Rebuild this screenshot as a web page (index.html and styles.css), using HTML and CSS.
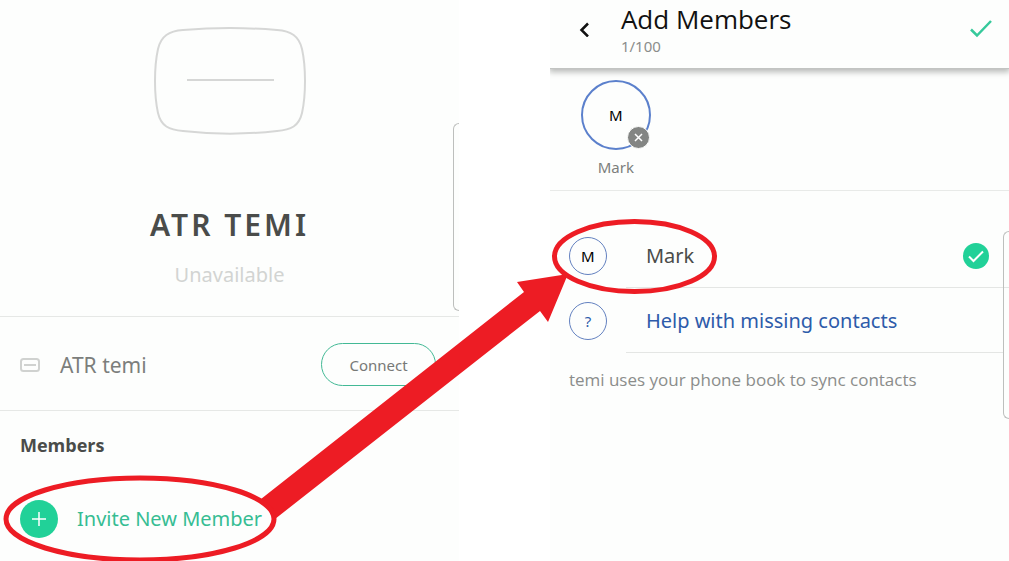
FILE: index.html
```html
<!DOCTYPE html>
<html lang="en">
<head>
<meta charset="utf-8">
<meta name="viewport" content="width=device-width, initial-scale=1">
<title>Add Members</title>
<link rel="stylesheet" href="styles.css">
</head>
<body>
<main class="guide">
  <section class="screen robot">
    <div class="hero">
      <svg class="hero-icon" viewBox="0 0 152 108" aria-hidden="true">
        <path d="M1 54C1 40 2 31 4 22C7 9 15 4 29 3C60 .5 92 .5 123 3C137 4 145 9 148 22C150 31 151 40 151 54C151 68 150 77 148 86C145 99 137 103 123 104C92 107.500 60 107.500 29 104C15 103 7 99 4 86C2 77 1 68 1 54Z"/>
        <path d="M33 53H120"/>
      </svg>
      <h1 class="robot-name">ATR TEMI</h1>
      <p class="status">Unavailable</p>
      <div class="edge-handle"></div>
    </div>
    <div class="device">
      <svg class="device-icon" viewBox="0 0 20 14" aria-hidden="true"><rect x="1" y="1" width="18" height="12" rx="2.500"/><path d="M4 7H16"/></svg>
      <span class="device-name">ATR temi</span>
      <button class="connect" type="button">Connect</button>
    </div>
    <h2 class="section-title">Members</h2>
    <button class="invite" type="button">
      <svg class="plus" viewBox="0 0 38 38" aria-hidden="true"><circle cx="19" cy="19" r="19"/><path d="M12 19H26M19 12V26"/></svg>
      <span>Invite New Member</span>
    </button>
  </section>

  <section class="screen picker">
    <header class="bar">
      <button class="icon-button" type="button" aria-label="Back">
        <svg class="back" viewBox="0 0 12 16" aria-hidden="true"><path d="M9 2.500L2.500 9L9 15.500"/></svg>
      </button>
      <div class="bar-text">
        <h2 class="bar-title">Add Members</h2>
        <p class="count">1/100</p>
      </div>
      <button class="icon-button" type="button" aria-label="Done">
        <svg class="done" viewBox="0 0 22 18" aria-hidden="true"><path d="M1 9.500L7 15.500L21 1"/></svg>
      </button>
    </header>
    <div class="chosen">
      <div class="person">
        <div class="avatar large">M
          <button class="remove" type="button" aria-label="Remove Mark">
            <svg viewBox="0 0 21 21" aria-hidden="true"><path d="M7 7L14 14M14 7L7 14"/></svg>
          </button>
        </div>
        <span class="person-name">Mark</span>
      </div>
    </div>
    <div class="contacts">
      <div class="contact">
        <span class="avatar">M</span>
        <div class="contact-body">
          <span>Mark</span>
          <svg class="selected" viewBox="0 0 26 26" role="img" aria-label="Selected"><circle cx="13" cy="13" r="13"/><path d="M6 13.500L10.500 18L20 8.500"/></svg>
        </div>
      </div>
      <div class="contact">
        <span class="avatar help-mark">?</span>
        <div class="contact-body"><a class="help" href="#help">Help with missing contacts</a></div>
      </div>
      <p class="note">temi uses your phone book to sync contacts</p>
      <div class="edge-handle"></div>
    </div>
  </section>

  <svg class="markup" viewBox="0 0 1009 561" aria-hidden="true">
    <path class="arrow" d="M261 499L524 292L517 282L568 274L548 322L540 311L275 519Z"/>
    <ellipse class="ring" cx="140" cy="519" rx="134" ry="41"/>
    <ellipse class="ring" cx="634.500" cy="256.500" rx="80" ry="35"/>
  </svg>
</main>
</body>
</html>
```
FILE: styles.css
```css
* { box-sizing: border-box; }
body { margin: 0; background: #fff; color: #4a4c4a; font-family: "Noto Sans", "Open Sans", sans-serif; overflow: hidden; }
h1, h2, p { margin: 0; }
button { padding: 0; border: 0; background: none; font: inherit; color: inherit; cursor: pointer; }
svg { display: block; fill: none; flex: none; }

.guide { position: relative; display: grid; grid-template-columns: 459fr 459fr; column-gap: 9%; min-height: 100vh; }
.screen { background: #fdfefd; min-width: 0; overflow: hidden; }

.hero { position: relative; display: flex; flex-direction: column; align-items: center; padding: 27px 0 27px; border-bottom: 1px solid #e6e8e6; }
.hero-icon { width: 152px; height: 108px; stroke: #d6d7d6; stroke-width: 2; }
.robot-name { margin-top: 69px; font-size: 30px; line-height: 42px; font-weight: 600; letter-spacing: 3px; }
.status { margin-top: 15px; font-size: 20px; line-height: 28px; color: #d2d4d2; }
.edge-handle { position: absolute; right: 0; top: 123px; width: 6px; height: 188px; border: 1px solid #bdbfbd; border-right: 0; border-radius: 6px 0 0 6px; }

.device { display: flex; align-items: center; padding: 26px 23px 24px 20px; border-bottom: 1px solid #e6e8e6; }
.device-icon { width: 20px; height: 14px; stroke: #d0d2d0; stroke-width: 2; }
.device-name { flex: 1; margin-left: 20px; font-size: 21px; line-height: 28px; color: #7c7e7c; }
.connect { width: 115px; height: 43px; border: 1px solid #42b995; border-radius: 22px; font-size: 15px; color: #777977; }

.section-title { margin: 20px 20px 0; font-family: "Open Sans", "Noto Sans", sans-serif; font-size: 18px; line-height: 28px; font-weight: 700; }
.invite { display: flex; align-items: center; gap: 19px; margin: 41px 20px 0; font-size: 20px; line-height: 28px; color: #36bd93; }
.plus { width: 38px; height: 38px; stroke: #fff; stroke-width: 1.500; }
.plus circle { fill: #21d198; stroke: none; }

.bar { position: relative; display: flex; align-items: flex-start; height: 69px; padding: 2px 17px 0 29px; border-bottom: 1px solid #c2c4c2; box-shadow: 0 2px 6px 1px #b6b8b6; }
.icon-button { height: 54px; display: flex; align-items: center; }
.back { width: 12px; height: 16px; stroke: #111; stroke-width: 2.500; }
.bar-text { flex: 1; margin-left: 30px; }
.bar-title { font-family: "Open Sans", "Noto Sans", sans-serif; font-size: 26px; line-height: 34px; font-weight: 400; color: #111; }
.count { font-size: 15px; line-height: 20px; color: #8b8d8b; }
.done { width: 22px; height: 18px; stroke: #36c99b; stroke-width: 2.500; }

.chosen { padding: 11px 31px 13px; border-bottom: 1px solid #e8eae8; }
.person { display: flex; flex-direction: column; align-items: center; width: 70px; }
.avatar { display: flex; align-items: center; justify-content: center; flex: none; width: 38px; height: 38px; border: 1px solid #6381c0; border-radius: 50%; font-size: 15px; color: #000; }
.large { position: relative; width: 70px; height: 70px; border: 2px solid #5b80cc; }
.remove { position: absolute; right: -1px; bottom: -1px; width: 23px; height: 23px; border: 1px solid #fdfefd; border-radius: 50%; background: #838583; }
.remove svg { stroke: #fff; stroke-width: 1.500; }
.person-name { margin-top: 7px; font-size: 15px; line-height: 20px; color: #7c7e7c; }

.contacts { position: relative; padding-top: 32px; }
.contact { display: flex; align-items: center; padding-left: 19px; }
.contact-body { display: flex; align-items: center; justify-content: space-between; flex: 1; height: 65px; margin-left: 19px; padding: 2px 20px 0; border-bottom: 1px solid #e4e6e4; font-size: 20px; line-height: 28px; }
.contact:nth-child(2) .contact-body { margin-right: 6px; }
.selected { width: 26px; height: 26px; stroke: #fff; stroke-width: 2; }
.selected circle { fill: #21d198; stroke: none; }
.help, .help-mark { color: #2d5baa; text-decoration: none; }
.note { padding: 15px 19px; font-family: "Open Sans", "Noto Sans", sans-serif; font-size: 17px; line-height: 24px; color: #8b8d8b; }
.contacts .edge-handle { top: 40px; }

.markup { position: absolute; top: 0; left: 0; width: 100%; pointer-events: none; }
.arrow { fill: #ed1c24; }
.ring { stroke: #ed1c24; stroke-width: 5; }
```
